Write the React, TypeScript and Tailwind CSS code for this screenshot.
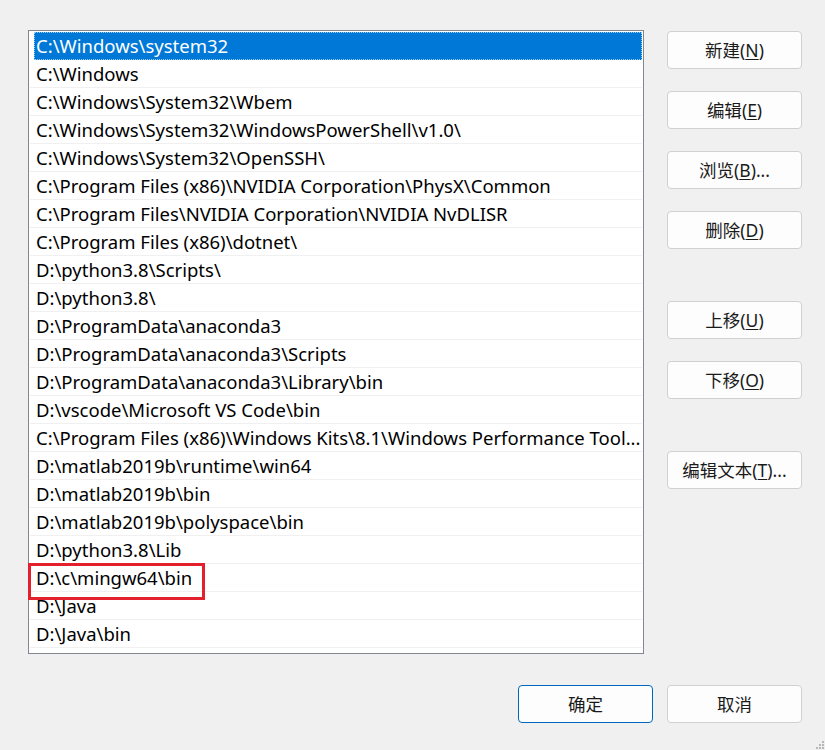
import React from 'react'

const paths = [
  'C:\\Windows\\system32',
  'C:\\Windows',
  'C:\\Windows\\System32\\Wbem',
  'C:\\Windows\\System32\\WindowsPowerShell\\v1.0\\',
  'C:\\Windows\\System32\\OpenSSH\\',
  'C:\\Program Files (x86)\\NVIDIA Corporation\\PhysX\\Common',
  'C:\\Program Files\\NVIDIA Corporation\\NVIDIA NvDLISR',
  'C:\\Program Files (x86)\\dotnet\\',
  'D:\\python3.8\\Scripts\\',
  'D:\\python3.8\\',
  'D:\\ProgramData\\anaconda3',
  'D:\\ProgramData\\anaconda3\\Scripts',
  'D:\\ProgramData\\anaconda3\\Library\\bin',
  'D:\\vscode\\Microsoft VS Code\\bin',
  'C:\\Program Files (x86)\\Windows Kits\\8.1\\Windows Performance Tool...',
  'D:\\matlab2019b\\runtime\\win64',
  'D:\\matlab2019b\\bin',
  'D:\\matlab2019b\\polyspace\\bin',
  'D:\\python3.8\\Lib',
  'D:\\c\\mingw64\\bin',
  'D:\\Java',
  'D:\\Java\\bin',
]

function Btn({ label, keyChar, suffix = '', primary = false, className = '' }: { label: string; keyChar?: string; suffix?: string; primary?: boolean; className?: string }) {
  return (
    <button
      className={`h-[38px] w-[135px] rounded-[4px] border bg-[#fdfdfd] text-[17.5px] text-[#1a1a1a] ${
        primary ? 'border-[#0067c0]' : 'border-[#d0d0d0]'
      } ${className}`}
    >
      {label}
      {keyChar && (
        <>
          (<span className="underline underline-offset-2">{keyChar}</span>)
        </>
      )}
      {suffix}
    </button>
  )
}

export default function App() {
  return (
    <div
      className="relative h-[750px] w-[825px] overflow-hidden bg-[#f0f0f0]"
      style={{ fontFamily: '"Noto Sans", "Noto Sans CJK SC", sans-serif' }}
    >
      <div className="flex pl-[28px] pt-[30px]">
        {/* path list */}
        <div className="relative h-[624px] w-[616px] border border-[#828790] bg-white px-[1px] pt-[1px]">
          {paths.map((p, i) =>
            i === 0 ? (
              <div
                key={i}
                className="ml-[4px] flex h-[28px] items-center overflow-hidden whitespace-nowrap border border-dotted border-[#99c9ef] bg-[#0078d7] pl-[1px] text-[18.5px] text-white"
              >
                {p}
              </div>
            ) : (
              <div
                key={i}
                className="flex h-[28px] items-center overflow-hidden whitespace-nowrap border-b border-[#f0f0f0] pl-[6px] text-[18.5px] text-black"
              >
                {p}
              </div>
            )
          )}
          {/* highlight box */}
          <div className="absolute left-[-1px] top-[532px] h-[37px] w-[177px] border-[3px] border-[#e3202b]" />
        </div>

        {/* side buttons */}
        <div className="ml-[23px] flex flex-col pt-[1px]">
          <Btn label="新建" keyChar="N" />
          <Btn label="编辑" keyChar="E" className="mt-[22px]" />
          <Btn label="浏览" keyChar="B" suffix="..." className="mt-[22px]" />
          <Btn label="删除" keyChar="D" className="mt-[22px]" />
          <Btn label="上移" keyChar="U" className="mt-[52px]" />
          <Btn label="下移" keyChar="O" className="mt-[22px]" />
          <Btn label="编辑文本" keyChar="T" suffix="..." className="mt-[52px]" />
        </div>
      </div>

      {/* bottom buttons */}
      <div className="mt-[31px] flex justify-end gap-[14px] pr-[23px]">
        <Btn label="确定" primary />
        <Btn label="取消" />
      </div>

      {/* resize grip */}
      <svg className="absolute bottom-0 right-0" width="14" height="14" viewBox="0 0 14 14">
        <g fill="#b8b8b8">
          <rect x="11" y="5" width="2" height="2" />
          <rect x="8" y="8" width="2" height="2" />
          <rect x="11" y="8" width="2" height="2" />
          <rect x="5" y="11" width="2" height="2" />
          <rect x="8" y="11" width="2" height="2" />
          <rect x="11" y="11" width="2" height="2" />
        </g>
      </svg>
    </div>
  )
}
